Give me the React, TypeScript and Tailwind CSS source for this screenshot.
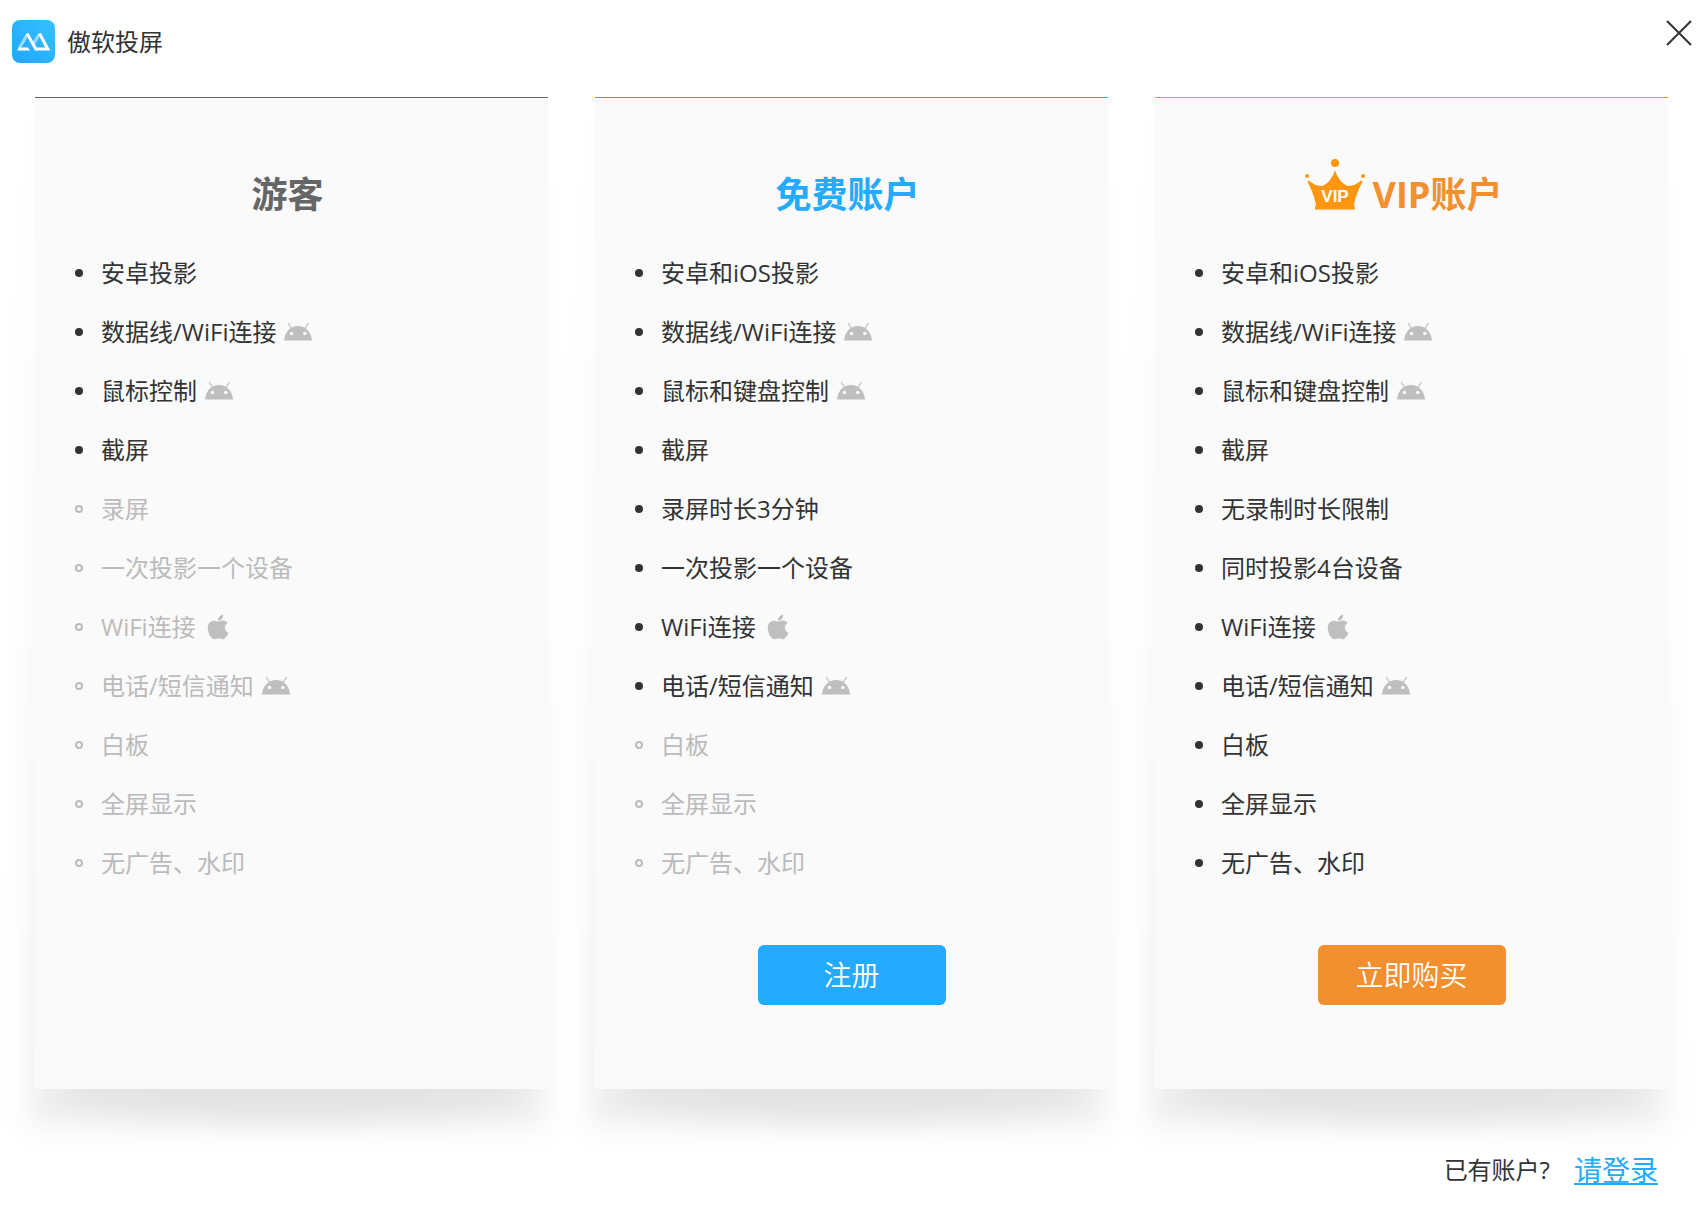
import { FaApple } from "react-icons/fa";

type Platform = "android" | "apple";

interface Feature {
  text: string;
  icon?: Platform;
  off?: boolean;
}

interface Plan {
  title: string;
  color: string;
  border: string;
  vip?: boolean;
  action?: { label: string; color: string };
  features: Feature[];
}

const plans: Plan[] = [
  {
    title: "游客",
    color: "text-[#666666]",
    border: "border-[#666666]",
    features: [
      { text: "安卓投影" },
      { text: "数据线/WiFi连接", icon: "android" },
      { text: "鼠标控制", icon: "android" },
      { text: "截屏" },
      { text: "录屏", off: true },
      { text: "一次投影一个设备", off: true },
      { text: "WiFi连接", icon: "apple", off: true },
      { text: "电话/短信通知", icon: "android", off: true },
      { text: "白板", off: true },
      { text: "全屏显示", off: true },
      { text: "无广告、水印", off: true },
    ],
  },
  {
    title: "免费账户",
    color: "text-[#24aaff]",
    border: "border-[#24aaff]",
    action: { label: "注册", color: "bg-[#24aaff]" },
    features: [
      { text: "安卓和iOS投影" },
      { text: "数据线/WiFi连接", icon: "android" },
      { text: "鼠标和键盘控制", icon: "android" },
      { text: "截屏" },
      { text: "录屏时长3分钟" },
      { text: "一次投影一个设备" },
      { text: "WiFi连接", icon: "apple" },
      { text: "电话/短信通知", icon: "android" },
      { text: "白板", off: true },
      { text: "全屏显示", off: true },
      { text: "无广告、水印", off: true },
    ],
  },
  {
    title: "VIP账户",
    color: "text-[#f28f2e]",
    border: "border-[#f28f2e]",
    vip: true,
    action: { label: "立即购买", color: "bg-[#f28f2e]" },
    features: [
      { text: "安卓和iOS投影" },
      { text: "数据线/WiFi连接", icon: "android" },
      { text: "鼠标和键盘控制", icon: "android" },
      { text: "截屏" },
      { text: "无录制时长限制" },
      { text: "同时投影4台设备" },
      { text: "WiFi连接", icon: "apple" },
      { text: "电话/短信通知", icon: "android" },
      { text: "白板" },
      { text: "全屏显示" },
      { text: "无广告、水印" },
    ],
  },
];

function Logo() {
  return (
    <svg width="43" height="43" viewBox="0 0 43 43" fill="none" aria-hidden="true">
      <defs>
        <linearGradient id="logo-bg" x1="1" y1="0" x2="0" y2="1">
          <stop offset="0" stopColor="#35c2ff" />
          <stop offset="1" stopColor="#22a4ff" />
        </linearGradient>
      </defs>
      <rect width="43" height="43" rx="8" fill="url(#logo-bg)" />
      <path d="M7 29 L15.2 14.5 M21.500 24 L27.500 14" stroke="#9bdcff" strokeWidth="3" />
      <path d="M5 30.500 L6.800 27.500 H16 L18 30.500 Z" fill="#fff" />
      <path d="M15 13.500 L23.800 29 H35.800 L27.500 13.500" stroke="#fff" strokeWidth="3" />
    </svg>
  );
}

function Crown() {
  return (
    <svg width="60" height="52" viewBox="0 0 60 52" fill="#ff9612" aria-hidden="true">
      <circle cx="30" cy="4" r="4" />
      <circle cx="2" cy="17" r="2" />
      <circle cx="58" cy="17" r="2" />
      <path d="M30 11 C32 18 37 25 43 27 C49 27 53 24 56 21.500 L57.500 22.500 C53 32 50 39 49 46.500 Q50 47 50 50.500 H10 Q10 47 11 46.500 C10 39 7 32 2.500 22.500 L4 21.500 C7 24 11 27 17 27 C23 25 28 18 30 11 Z" />
      <text x="30" y="43" fill="#fff" fontSize="17" fontWeight="700" textAnchor="middle" fontFamily="Liberation Sans, sans-serif">
        VIP
      </text>
    </svg>
  );
}

function AndroidHead() {
  return (
    <svg width="28" height="19" viewBox="0 0 28 19" fill="none" aria-hidden="true">
      <path d="M4 1 L8 7 M24.500 1 L20.500 7" stroke="currentColor" strokeWidth="1.200" />
      <path d="M0 18.500 C0.500 10 6.500 4 14 4 C21.500 4 27.500 10 28 18.500 Z" fill="currentColor" />
      <circle cx="7.500" cy="11.500" r="1.800" fill="#fafafa" />
      <circle cx="20.800" cy="11.500" r="1.800" fill="#fafafa" />
    </svg>
  );
}

function PlanCard({ plan }: { plan: Plan }) {
  return (
    <section
      className={`relative flex flex-1 flex-col items-center border-t bg-[#fafafa] pt-16 pb-21 ${plan.border}`}
    >
      {/* soft shadow: grows towards the bottom, deepest under the middle */}
      <div className="absolute top-0 right-1 -bottom-9 -left-1 -z-10 bg-linear-to-b from-transparent to-black/7 blur-[14px]" />
      <div className="absolute inset-x-6 -bottom-9 -z-10 h-20 rounded-[50%] bg-black/4 blur-[14px]" />

      <h2 className={`flex h-16 items-center gap-2 pt-0.5 text-4xl font-bold ${plan.vip ? "pr-4" : "pr-2"} ${plan.color}`}>
        {plan.vip && (
          <span className="pb-5">
            <Crown />
          </span>
        )}
        {plan.title}
      </h2>

      <ul className="mt-[17px] self-stretch pl-10">
        {plan.features.map((feature) => (
          <li
            key={feature.text}
            className={`flex h-[59px] items-center text-2xl ${feature.off ? "text-[#bbbbbb]" : "text-[#333333]"}`}
          >
            <span
              className={`mr-[18px] size-2 rounded-full ${feature.off ? "border-2 border-[#bbbbbb]" : "bg-[#333333]"}`}
            />
            {feature.text}
            {feature.icon && (
              <span className="ml-2 text-[#bfbfbf]">
                {feature.icon === "android" ? <AndroidHead /> : <FaApple size={28} />}
              </span>
            )}
          </li>
        ))}
      </ul>

      {plan.action && (
        <button
          type="button"
          className={`mt-[53px] h-15 w-47 rounded-md text-[28px] font-[350] text-white ${plan.action.color}`}
        >
          {plan.action.label}
        </button>
      )}
    </section>
  );
}

export default function App() {
  return (
    <div className="isolate min-h-screen bg-white font-['Open_Sans','Noto_Sans_CJK_SC',sans-serif] text-[#333333]">
      <header className="flex h-[97px] items-start justify-between pt-5 pr-[14px] pl-3">
        <div className="flex items-center gap-3">
          <Logo />
          <h1 className="text-2xl">傲软投屏</h1>
        </div>
        <button type="button" aria-label="关闭">
          <svg width="26" height="26" viewBox="0 0 26 26" stroke="#333333" strokeWidth="2" aria-hidden="true">
            <path d="M1 1 L25 25 M25 1 L1 25" />
          </svg>
        </button>
      </header>

      <main className="flex gap-[47px] pr-[38px] pl-[35px]">
        {plans.map((plan) => (
          <PlanCard key={plan.title} plan={plan} />
        ))}
      </main>

      <footer className="relative mt-[60px] flex items-center justify-end gap-6 pr-12">
        <span className="text-2xl">已有账户?</span>
        <a href="#login" className="text-[28px] text-[#24aaff] underline">
          请登录
        </a>
      </footer>
    </div>
  );
}
